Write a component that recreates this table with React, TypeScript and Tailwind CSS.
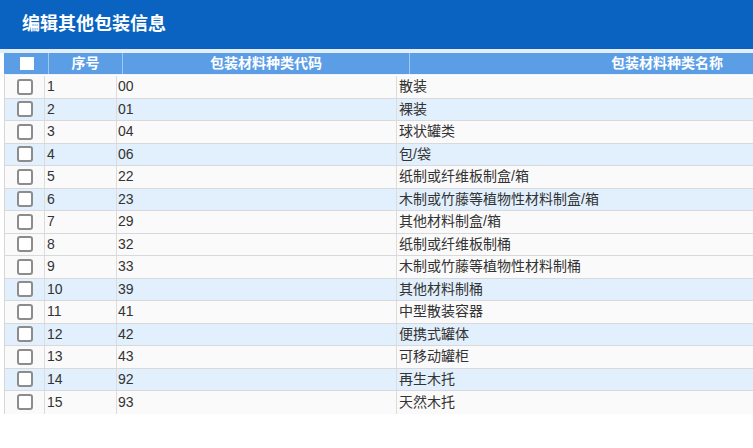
const rows: [string, string, string][] = [
  ['1', '00', '散装'],
  ['2', '01', '裸装'],
  ['3', '04', '球状罐类'],
  ['4', '06', '包/袋'],
  ['5', '22', '纸制或纤维板制盒/箱'],
  ['6', '23', '木制或竹藤等植物性材料制盒/箱'],
  ['7', '29', '其他材料制盒/箱'],
  ['8', '32', '纸制或纤维板制桶'],
  ['9', '33', '木制或竹藤等植物性材料制桶'],
  ['10', '39', '其他材料制桶'],
  ['11', '41', '中型散装容器'],
  ['12', '42', '便携式罐体'],
  ['13', '43', '可移动罐柜'],
  ['14', '92', '再生木托'],
  ['15', '93', '天然木托'],
];

const blueRows = new Set([1, 3, 5, 9, 11, 13]);

export default function App() {
  return (
    <div
      className="w-[753px] h-[448px] bg-white overflow-hidden"
      style={{ fontFamily: '"Liberation Sans", "Noto Sans CJK SC", sans-serif' }}
    >
      <div className="h-[49px] bg-[#0b63c1] flex items-center pl-[22px]">
        <h1 className="text-white font-bold text-[18px] pb-[1px]">编辑其他包装信息</h1>
      </div>
      <div className="h-[4px] bg-[#e4eefa]" />

      <div className="ml-[4px]">
        {/* header */}
        <div className="flex h-[22px] bg-[#5c9ee6] text-white font-bold text-[14px] border-b border-[#eaf3fc]">
          <div className="w-[45px] shrink-0 flex items-center justify-center border-r border-[#9cc8f2]">
            <span className="w-[14px] h-[13px] bg-white ml-[1px]" />
          </div>
          <div className="w-[74px] shrink-0 flex items-center justify-center border-r border-[#9cc8f2]">序号</div>
          <div className="w-[287px] shrink-0 flex items-center justify-center border-r border-[#9cc8f2]">包装材料种类代码</div>
          <div className="w-[514px] shrink-0 flex items-center justify-center">包装材料种类名称</div>
        </div>

        {/* body */}
        <div className="border-l border-[#d6d6d6] pt-[1px]">
          {rows.map(([no, code, name], i) => (
            <div
              key={no}
              className={`flex h-[22.5px] text-[14px] text-[#333] ${
                i < rows.length - 1 ? 'border-b border-[#d9d9dc]' : ''
              } ${blueRows.has(i) ? 'bg-[#e2effc]' : 'bg-[#fbfafa]'}`}
            >
              <div className="w-[40px] shrink-0 flex items-center justify-center border-r border-[#dcdcdc]">
                <span className="w-[16px] h-[16px] rounded-[3px] border-2 border-[#8c8c8c] bg-white ml-[1px]" />
              </div>
              <div className="w-[72px] shrink-0 flex items-center pl-[2px] border-r border-[#dcdcdc]">{no}</div>
              <div className="w-[280px] shrink-0 flex items-center pl-[1px] border-r border-[#dcdcdc]">{code}</div>
              <div className="flex-1 flex items-center pl-[2px] whitespace-nowrap">{name}</div>
            </div>
          ))}
        </div>
      </div>
    </div>
  );
}
